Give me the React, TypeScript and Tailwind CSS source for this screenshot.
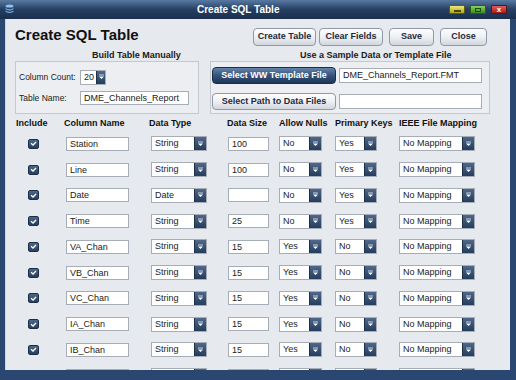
import React from "react";

type Row = [string, string, string, string, string];

const rows: Row[] = [
  ["Station", "String", "100", "No", "Yes"],
  ["Line", "String", "100", "No", "Yes"],
  ["Date", "Date", "", "No", "Yes"],
  ["Time", "String", "25", "No", "Yes"],
  ["VA_Chan", "String", "15", "Yes", "No"],
  ["VB_Chan", "String", "15", "Yes", "No"],
  ["VC_Chan", "String", "15", "Yes", "No"],
  ["IA_Chan", "String", "15", "Yes", "No"],
  ["IB_Chan", "String", "15", "Yes", "No"],
  ["", "", "", "", ""],
];

function Arrow() {
  return (
    <svg width="7" height="6" viewBox="0 0 7 6">
      <rect x="1" y="0.5" width="5" height="1" fill="#c9d4e2" />
      <path d="M1 2.5 L6 2.5 L3.5 5 Z" fill="#ffffff" />
    </svg>
  );
}

function Sel({ value, w, btn = "w-[12px]" }: { value: string; w: string; btn?: string }) {
  return (
    <div className={`${w} h-[15px] flex border border-[#a7adb6] bg-white`}>
      <div className="flex-1 pl-[3px] text-[9px] leading-[13px] text-[#222]">{value}</div>
      <div
        className={`${btn} h-full flex items-center justify-center bg-gradient-to-b from-[#50698a] to-[#243d5d] border-l border-[#1d3049]`}
      >
        <Arrow />
      </div>
    </div>
  );
}

function Inp({ value, w, h = "h-[14px]" }: { value: string; w: string; h?: string }) {
  return (
    <div
      className={`${w} ${h} border border-[#a7adb6] bg-white pl-[3px] text-[9px] leading-[12px] text-[#222] overflow-hidden whitespace-nowrap`}
    >
      {value}
    </div>
  );
}

function Check() {
  return (
    <div className="ml-[12px] w-[11px] h-[10px] rounded-[2px] bg-gradient-to-b from-[#4d6788] to-[#263f60] border border-[#1c2e47] flex items-center justify-center">
      <svg width="7" height="5" viewBox="0 0 7 5">
        <path d="M1 2.3 L3 4 L6 1" stroke="#ffffff" strokeWidth="1.3" fill="none" />
      </svg>
    </div>
  );
}

const lightBtn =
  "h-[18px] flex items-center justify-center rounded-[4px] border border-[#8e98a6] bg-gradient-to-b from-[#fdfdfe] via-[#eef0f3] to-[#d2d7de] text-[9px] font-bold text-[#1d2b3e]";

export default function App() {
  return (
    <div className="w-[516px] h-[380px] flex flex-col overflow-hidden bg-[#294770] font-['Liberation_Sans',Arial,sans-serif]">
      {/* title bar */}
      <div className="h-[19px] shrink-0 flex items-center bg-gradient-to-b from-[#5a7aa3] via-[#243f63] to-[#1b2f4c]">
        <svg className="ml-[5px]" width="9" height="11" viewBox="0 0 9 11">
          <ellipse cx="4.5" cy="2" rx="4" ry="1.6" fill="#8fc3f0" />
          <path d="M0.5 4 Q4.5 6.5 8.5 4 L8.5 5.2 Q4.5 7.7 0.5 5.2 Z" fill="#6fa8e0" />
          <path d="M0.5 6.6 Q4.5 9 8.5 6.6 L8.5 7.8 Q4.5 10.3 0.5 7.8 Z" fill="#6fa8e0" />
        </svg>
        <div className="ml-[183px] text-[10px] font-bold text-white">Create SQL Table</div>
        <div className="ml-auto mr-[9px] flex gap-[5px]">
          <div className="w-[16px] h-[9px] rounded-[1px] border border-[#5f5a18] bg-gradient-to-b from-[#f0ea70] to-[#aea61a] flex items-end justify-center pb-[1px]">
            <div className="w-[7px] h-[2px] bg-[#4a4610]" />
          </div>
          <div className="w-[16px] h-[9px] rounded-[1px] border border-[#2f5a18] bg-gradient-to-b from-[#8ad25c] to-[#3c8a22] flex items-center justify-center">
            <div className="w-[6px] h-[4px] border border-[#1f4a10]" />
          </div>
          <div className="w-[16px] h-[9px] rounded-[1px] border border-[#5a1414] bg-gradient-to-b from-[#e85a5a] to-[#a41c1c] flex items-center justify-center text-[8px] leading-[8px] font-bold text-white">
            x
          </div>
        </div>
      </div>

      {/* window body */}
      <div className="ml-[5px] w-[505px] h-[351px] bg-[#e6e9ed] overflow-hidden text-[#141414] shadow-[inset_1px_0_0_#cfd5dd]">
        {/* heading + action buttons */}
        <div className="flex items-start pt-[9px] pl-[10px]">
          <h1 className="-mt-[2px] text-[15px] leading-[18px] font-bold text-[#111]">Create SQL Table</h1>
          <div className="ml-auto mr-[23px] flex">
            <button className={`${lightBtn} w-[63px]`}>Create Table</button>
            <button className={`${lightBtn} w-[64px] ml-[3px]`}>Clear Fields</button>
            <button className={`${lightBtn} w-[45px] ml-[6px]`}>Save</button>
            <button className={`${lightBtn} w-[47px] ml-[6px]`}>Close</button>
          </div>
        </div>

        {/* section titles */}
        <div className="mt-[3px] h-[12px] flex text-[9px] leading-[12px] font-bold text-[#1a1a1a]">
          <span className="ml-[87px] w-[208px]">Build Table Manually</span>
          <span>Use a Sample Data or Template File</span>
        </div>

        {/* group boxes */}
        <div className="flex pl-[10px] gap-[11px]">
          <div className="w-[184px] h-[53px] border border-[#c4c9d0] bg-[#eceef1] pl-[3px] pt-[8px] text-[8.5px] text-[#1a1a1a]">
            <div className="h-[14px] flex items-center">
              <span className="w-[61px]">Column Count:</span>
              <Sel value="20" w="w-[26px]" btn="w-[9px]" />
            </div>
            <div className="mt-[7px] h-[14px] flex items-center">
              <span className="w-[61px]">Table Name:</span>
              <Inp value="DME_Channels_Report" w="w-[109px]" />
            </div>
          </div>
          <div className="w-[280px] h-[53px] border border-[#c4c9d0] bg-[#eceef1] pl-[1px] pt-[5px]">
            <div className="flex items-center gap-[3px]">
              <button className="w-[124px] h-[17px] rounded-[4px] border border-[#1b2d47] bg-gradient-to-b from-[#6584aa] via-[#35537b] to-[#1e3757] text-[9px] font-bold text-white">
                Select WW Template File
              </button>
              <Inp value="DME_Channels_Report.FMT" w="w-[143px]" h="h-[15px]" />
            </div>
            <div className="mt-[9px] flex items-center gap-[3px]">
              <button className={`${lightBtn} !h-[17px] w-[124px]`}>Select Path to Data Files</button>
              <Inp value="" w="w-[143px]" h="h-[15px]" />
            </div>
          </div>
        </div>

        {/* column headers */}
        <div className="mt-[3px] h-[14px] pl-[11px] grid grid-cols-[48px_85px_78px_52px_56px_64px_1fr] items-center text-[9px] font-bold text-[#111]">
          <span>Include</span>
          <span>Column Name</span>
          <span>Data Type</span>
          <span>Data Size</span>
          <span>Allow Nulls</span>
          <span>Primary Keys</span>
          <span>IEEE File Mapping</span>
        </div>

        {/* field rows */}
        {rows.map((r, i) => (
          <div
            key={i}
            className="h-[25.75px] pl-[11px] grid grid-cols-[48px_85px_78px_52px_56px_64px_1fr] items-center"
          >
            <Check />
            <div className="ml-[2px]">
              <Inp value={r[0]} w="w-[63px]" />
            </div>
            <div className="ml-[2px]">
              <Sel value={r[1]} w="w-[56px]" />
            </div>
            <div className="ml-[1px]">
              <Inp value={r[2]} w="w-[41px]" />
            </div>
            <Sel value={r[3]} w="w-[43px]" />
            <Sel value={r[4]} w="w-[42px]" />
            <Sel value={r[0] ? "No Mapping" : ""} w="w-[76px]" />
          </div>
        ))}
      </div>
    </div>
  );
}
